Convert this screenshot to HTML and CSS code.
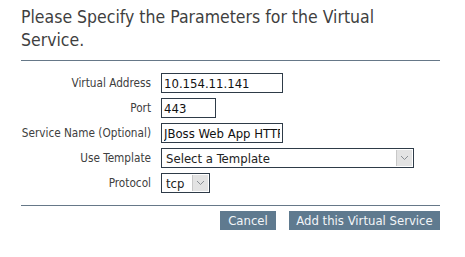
FILE: index.html
```html
<!DOCTYPE html>
<html>
<head>
<meta charset="utf-8">
<link rel="stylesheet" href="styles.css">
</head>
<body>
<div class="dialog">
  <h1 class="title">Please Specify the Parameters for the Virtual Service.</h1>
  <div class="rule"></div>
  <form class="form">
    <label class="label">Virtual Address</label>
    <input class="field field-wide" type="text" value="10.154.11.141">
    <label class="label">Port</label>
    <input class="field field-port" type="text" value="443">
    <label class="label">Service Name (Optional)</label>
    <input class="field field-wide" type="text" value="JBoss Web App HTTPS">
    <label class="label">Use Template</label>
    <div class="select select-template">
      <span class="select-text">Select a Template</span>
      <span class="select-arrow"><svg width="9" height="6" viewBox="0 0 9 6"><path d="M1 1 L4.5 4.5 L8 1" fill="none" stroke="#8a8f94" stroke-width="1"/></svg></span>
    </div>
    <label class="label">Protocol</label>
    <div class="select select-protocol">
      <span class="select-text">tcp</span>
      <span class="select-arrow"><svg width="9" height="6" viewBox="0 0 9 6"><path d="M1 1 L4.5 4.5 L8 1" fill="none" stroke="#8a8f94" stroke-width="1"/></svg></span>
    </div>
  </form>
  <div class="rule rule-bottom"></div>
  <div class="actions">
    <button class="btn btn-cancel" type="button">Cancel</button>
    <button class="btn btn-add" type="button">Add this Virtual Service</button>
  </div>
</div>
</body>
</html>
```

FILE: styles.css
```css
html, body {
  margin: 0;
  padding: 0;
  background: #ffffff;
}
body {
  font-family: "DejaVu Sans Condensed", "DejaVu Sans", sans-serif;
  color: #3d3d3d;
}
.dialog {
  width: 419px;
  padding: 6px 0 0 21px;
}
.title {
  margin: 0;
  font-size: 17.5px;
  font-weight: normal;
  line-height: 23px;
  color: #3f3f3f;
  width: 400px;
}
.rule {
  height: 1px;
  background: #667888;
  margin-top: 8px;
}
.rule-bottom {
  margin-top: 12px;
}
.form {
  display: grid;
  grid-template-columns: 130px auto;
  column-gap: 10px;
  row-gap: 5px;
  align-items: center;
  justify-items: start;
  margin-top: 12px;
}
.label {
  justify-self: end;
  white-space: nowrap;
  font-size: 11.7px;
  color: #404040;
}
.field {
  box-sizing: border-box;
  height: 20px;
  border: 1px solid #2e3b48;
  padding: 0 2px;
  margin: 0;
  font-family: "DejaVu Sans Condensed", "DejaVu Sans", sans-serif;
  font-size: 13px;
  color: #111;
  background: #fff;
  outline: none;
}
.field-wide { width: 122px; }
.field-port { width: 55px; }
.select {
  box-sizing: border-box;
  height: 20px;
  border: 1px solid #2e3b48;
  position: relative;
  display: flex;
  align-items: center;
  font-size: 13px;
  color: #222;
  background: #fff;
}
.select-template { width: 253px; }
.select-protocol { width: 49px; }
.select-text {
  padding-left: 4px;
}
.select-arrow {
  position: absolute;
  right: 1px;
  top: 1px;
  bottom: 1px;
  width: 15px;
  background: #e3e3e3;
  border-left: 1px solid #c8c8c8;
  display: flex;
  align-items: center;
  justify-content: center;
}
.actions {
  display: flex;
  justify-content: flex-end;
  gap: 13px;
  margin-top: 5px;
}
.btn {
  height: 19px;
  border: none;
  padding: 0;
  margin: 0;
  white-space: nowrap;
  text-align: center;
  background: #5f7a8f;
  color: #f2f5f8;
  font-family: "DejaVu Sans Condensed", "DejaVu Sans", sans-serif;
  font-size: 13px;
  line-height: 19px;
}
.btn-cancel { width: 56px; }
.btn-add { width: 151px; }
```
